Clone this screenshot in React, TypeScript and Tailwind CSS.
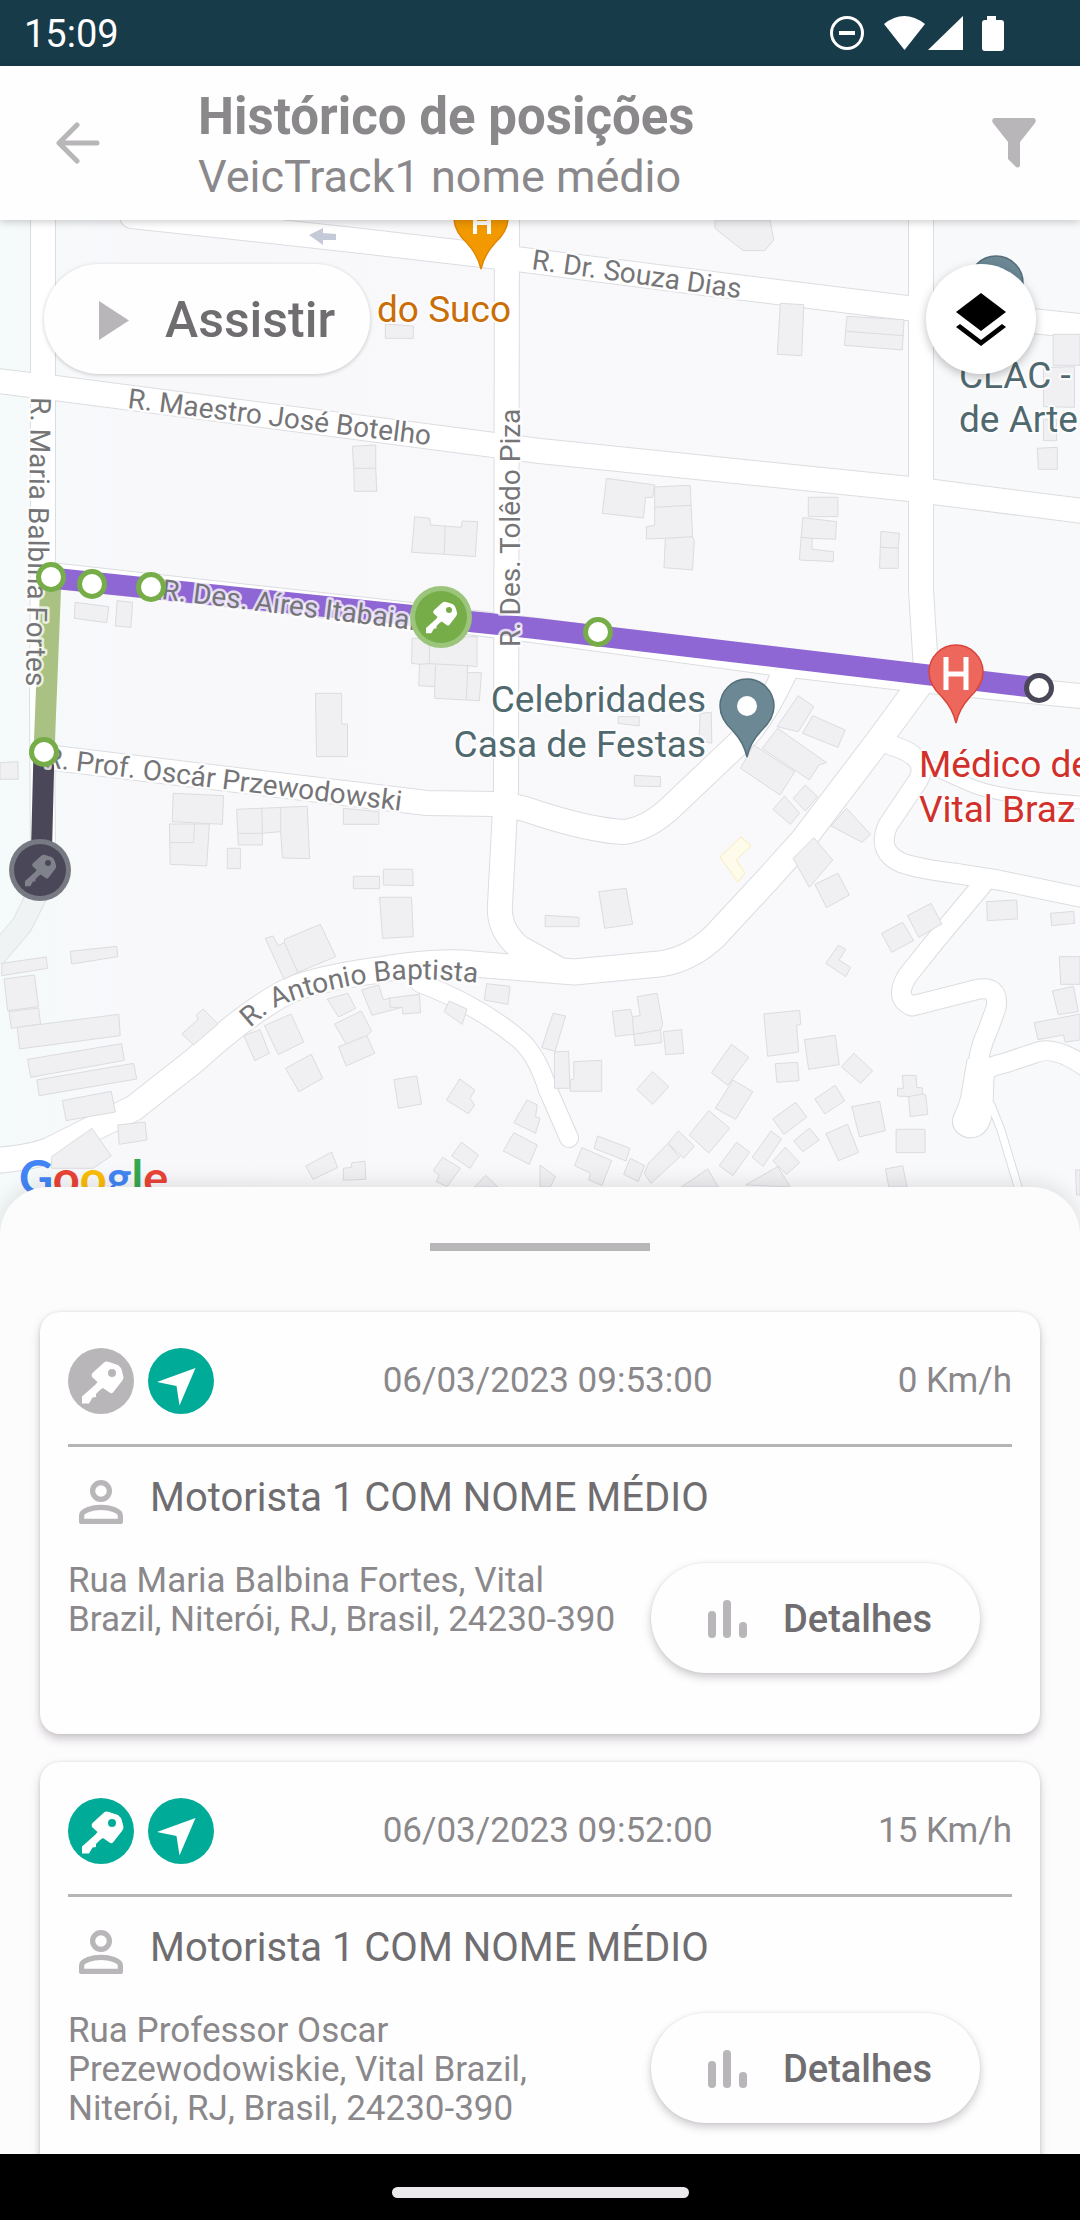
const tiles = [
    {
        x: 0, y: 220,
        buildings: [
            "1119,312 1200,318 1200,355 1119,355",
            "1023,679 1091,675 1091,745 1094,814 1029,814 1027,745",
            "1204,890 1248,895 1250,915 1340,922 1342,903 1387,905 1380,1010 1290,1003 1195,997",
        ],
        walls: ["1027,745 1091,745", "1293,918 1290,1003"],
    },
    {
        x: 540, y: 220,
        buildings: [
            "508,0 668,0 679,60 652,92 590,92 508,25",
            "698,250 766,254 760,407 689,403",
            "891,289 1057,299 1052,390 884,376",
            "1490,343 1568,343 1568,436 1490,436",
            "1462,443 1552,440 1552,562 1462,560",
            "1462,598 1500,598 1500,662 1462,662",
            "1444,685 1502,682 1502,748 1447,748",
            "193,775 333,795 327,832 307,832 300,894 181,880",
            "333,801 436,796 443,950 448,962 443,1050 360,1043 364,955 309,957 309,920 333,916",
            "779,832 865,832 865,890 779,890",
            "763,893 861,905 858,958 790,955 790,988 852,995 852,1025 753,1020",
            "990,934 1044,940 1040,984 1040,1045 986,1045 988,985",
        ],
        walls: ["891,334 1055,347", "333,862 438,856", "364,955 443,950", "757,952 790,955", "988,982 1040,984"],
    },
    {
        x: 0, y: 540,
        buildings: [
            "218,187 316,200 310,248 216,235",
            "340,182 385,187 380,262 335,258",
            "1197,295 1385,290 1385,380 1358,377 1357,398 1398,398 1392,482 1262,475 1262,440 1216,437 1218,373 1195,370",
            "916,460 992,460 992,552 1009,552 1009,650 919,650",
            "0,668 52,665 53,718 0,718",
            "503,760 649,767 646,853 500,845",
            "492,852 608,852 600,978 494,973",
            "687,808 892,799 899,956 820,954 815,875 762,880 762,915 692,915",
            "660,925 698,925 698,986 660,986",
            "997,805 1100,815 1100,853 997,853",
            "1026,1009 1102,1009 1102,1046 1026,1046",
            "1113,988 1198,988 1200,1037 1113,1035",
        ],
        walls: [
            "1247,295 1247,371 1358,377 1354,478",
            "1218,373 1247,371",
            "1265,375 1262,440",
            "494,908 562,908 565,852",
            "760,806 762,880 692,880",
            "815,802 815,875",
        ],
    },
    {
        x: 540, y: 540,
        buildings: [
            "227,530 288,530 288,558 227,550",
            "465,520 497,517 499,610 462,600",
            "274,706 350,710 350,740 274,738",
            "750,467 795,500 750,575 688,560",
            "792,527 886,570 865,622 762,580",
            "690,565 832,668 810,675 782,720 645,625",
            "620,615 740,695 697,765 582,685",
            "770,735 806,770 770,813 735,775",
            "710,768 754,820 727,853 676,808",
            "890,805 960,883 935,907 845,858",
            "795,893 850,960 782,1042 735,955",
            "865,1000 898,1065 832,1103 798,1033",
            "1297,1085 1384,1080 1387,1137 1299,1142",
            "1135,1090 1167,1152 1100,1192 1067,1127",
            "171,1055 250,1045 269,1153 188,1165",
        ],
        walls: [],
    },
    {
        x: 0, y: 880,
        buildings: [
            "1102,52 1195,52 1200,170 1111,175",
            "770,175 793,168 807,197 826,188 826,178 930,133 975,230 865,277 825,298",
            "204,214 339,199 342,230 208,252",
            "5,250 134,231 138,265 5,287",
            "12,297 100,285 112,380 22,392",
            "26,395 112,384 118,432 33,445",
            "50,442 345,403 349,467 57,507",
            "80,538 353,491 361,541 89,592",
            "107,600 388,550 397,597 114,647",
            "181,662 323,634 335,696 192,722",
            "342,735 421,726 427,780 346,793",
            "267,745 323,828 270,865 150,865 150,830",
            "528,462 575,418 570,405 590,387 633,432 562,495",
            "708,467 755,449 782,520 740,542",
            "768,437 845,402 882,486 808,524",
            "829,565 904,523 937,595 868,635",
            "971,432 1049,393 1079,453 1065,467 1088,520 1005,558 983,500 1005,492",
            "950,357 1010,340 1033,385 983,411",
            "1050,330 1100,315 1113,360 1131,354 1218,343 1221,398 1170,402 1168,382 1080,406",
            "1304,363 1356,387 1342,433 1290,395",
            "1413,311 1481,319 1475,373 1406,360",
            "1144,599 1210,588 1224,672 1157,685",
            "1335,597 1379,630 1365,655 1378,675 1360,701 1296,660",
            "1530,660 1560,675 1555,710 1568,715 1555,760 1492,728",
            "1492,758 1560,795 1537,853 1461,813",
            "1340,787 1389,825 1365,865 1311,828",
            "1285,832 1337,865 1298,920 1267,905 1275,885 1258,872",
            "888,858 963,816 980,863 909,898",
            "997,865 1020,862 1022,848 1060,844 1062,898 997,901",
            "1410,886 1446,921 1378,921",
        ],
        walls: ["826,188 865,277", "1005,492 1065,467", "1131,354 1133,382 1168,382"],
    },
    {
        x: 540, y: 880,
        buildings: [
            "15,106 113,112 113,140 15,140",
            "282,350 340,340 356,432 350,452 353,488 276,497 272,463 219,469 210,394 263,388 268,410 291,407",
            "358,455 411,449 417,520 365,524",
            "38,400 74,408 44,514 5,503",
            "42,516 83,514 87,625 42,625",
            "98,545 179,541 179,634 88,634 88,600 98,597",
            "327,575 374,620 327,673 281,628",
            "556,493 606,532 545,616 498,578",
            "560,600 618,635 568,718 509,685",
            "490,692 551,745 490,819 433,765",
            "402,753 448,798 417,835 372,790",
            "372,790 405,832 322,910 303,880 315,850",
            "167,768 261,805 250,843 157,805",
            "122,803 208,842 180,916 141,900 147,880 100,857",
            "262,835 304,857 285,905 243,883",
            "0,855 45,890 30,921 0,921",
            "487,867 518,921 410,921",
            "690,860 727,921 597,915",
            "571,787 609,817 560,887 520,857",
            "671,753 701,777 648,859 616,832",
            "712,802 754,848 716,883 676,843",
            "782,744 811,780 763,815 737,783",
            "742,667 775,711 708,763 676,717",
            "857,616 885,662 827,702 798,657",
            "650,402 754,391 757,433 745,436 751,516 661,529",
            "768,479 857,466 869,554 780,568",
            "683,551 748,547 752,602 688,607",
            "911,520 966,572 931,610 875,560",
            "905,680 986,664 1003,752 928,771",
            "830,761 893,733 925,817 867,842",
            "1052,586 1092,586 1094,622 1111,624 1111,642 1120,645 1126,703 1075,710 1070,650 1038,648 1038,625 1055,625",
            "1034,748 1118,748 1118,818 1034,818",
            "1003,867 1053,857 1066,921 1013,921",
            "866,196 888,208 868,240 902,262 888,290 830,250",
            "992,160 1053,127 1085,182 1021,217",
            "1482,100 1550,94 1552,130 1486,137",
            "1508,230 1568,230 1568,313 1512,313",
            "1488,333 1549,319 1563,395 1505,404",
            "1435,428 1568,402 1568,480 1525,487 1520,465 1446,479",
            "1555,870 1568,870 1568,945 1558,945",
        ],
        walls: ["268,410 272,463 350,450", "1070,650 1111,642"],
    },
];

const roads = [
    { d: "M43 200V540L42 700L43 870", width: 24 },
    { d: "M132 216L344 239L508 258L720 285L907 308L1090 327", width: 24 },
    { d: "M-10 380L55 388L494 445L540 451L910 489L934 492L1090 512", width: 24 },
    { d: "M507 200L506 790L500 905Q498 930 520 948L560 970", width: 24 },
    { d: "M921 200V590L926 670", width: 24 },
    { d: "M50 575L411 615L540 631L774 663L920 680L1090 697", width: 24 },
    { d: "M46 757L427 803L494 804Q512 804 540 814Q590 830 623 832Q645 830 668 810L745 737Q765 715 785 672", width: 24 },
    { d: "M926 676L879 740L803 840L767 880L715 936Q690 960 659 964L574 972L473 964Q440 960 379 970Q320 978 290 990Q250 1010 195 1060L134 1108L50 1150Q30 1158 -10 1161", width: 25 },
    { d: "M420 983Q480 1006 520 1040Q537 1055 548 1090L569 1138", width: 18 },
    { d: "M890 745Q935 758 915 785L888 825Q876 852 902 863Q920 869 953 873L998 880L1090 899", width: 19 },
    { d: "M925 765L970 785Q1000 798 1090 803", width: 12 },
    { d: "M982 885L936 940L908 975Q893 998 912 1006L975 990Q1000 984 996 1008L988 1030Q978 1050 976 1080", width: 19 },
    { d: "M978 1075Q990 1066 1005 1063L1035 1053Q1055 1044 1090 1070", width: 19 },
    { d: "M991 1105L1001 1130L1022 1200", width: 7 },
];

const deadEnd = "M968 1060L962 1095Q960 1105 956 1112Q950 1124 958 1132Q968 1140 979 1135Q987 1131 990 1120L992 1108L993 1078Q994 1071 1002 1069L985 1055Z";

const stops = [
    { x: 51, y: 577, color: "#76ad48" },
    { x: 92, y: 584, color: "#76ad48" },
    { x: 151, y: 587, color: "#76ad48" },
    { x: 44, y: 752, color: "#76ad48" },
    { x: 598, y: 632, color: "#76ad48" },
    { x: 1039, y: 688, color: "#4a4858" },
];

const positions = [
    {
        date: "06/03/2023 09:53:00",
        speed: "0 Km/h",
        driver: "Motorista 1 COM NOME MÉDIO",
        address: "Rua Maria Balbina Fortes, Vital Brazil, Niterói, RJ, Brasil, 24230-390",
        ignition: false,
    },
    {
        date: "06/03/2023 09:52:00",
        speed: "15 Km/h",
        driver: "Motorista 1 COM NOME MÉDIO",
        address: "Rua Professor Oscar Prezewodowiskie, Vital Brazil, Niterói, RJ, Brasil, 24230-390",
        ignition: true,
    },
];

const keyPath = "M36 14.5Q38 13 41 14L50 17Q53 19 54 23L55.5 29Q55.5 31 54 33L45 44.5Q43.5 46 41.5 44.5L35 40L32 42L28 46L28 49L24.5 49.5L21 55.5H14V48.5L27.5 36.5L29.5 34L24 29Q23 27 24.5 25Z";

function StatusBar() {
    return (
        <div className="flex h-[66px] flex-none items-center justify-between bg-[#183b4a] pt-0.5 pr-[76px] pl-6 text-white">
            <span className="text-[38px]">15:09</span>
            <svg viewBox="0 0 174 36" className="h-9 w-[174px]" fill="#fff">
                <circle cx="17" cy="17" r="15.5" fill="none" stroke="#fff" strokeWidth="3" />
                <rect x="9" y="15" width="16" height="4" />
                <path d="M54 8Q74 -8 95 8L74.5 34Z" />
                <path d="M98 34L133 0V34Z" />
                <path d="M157 0h9v4h5a3 3 0 0 1 3 3v25a3 3 0 0 1-3 3h-16a3 3 0 0 1-3-3V7a3 3 0 0 1 3-3h2z" />
            </svg>
        </div>
    );
}

function Header() {
    return (
        <header className="relative z-10 flex h-[154px] flex-none items-center bg-[#fefefe] pr-11 pl-14 text-[#8a888b] shadow-[0_2px_8px_rgba(0,0,0,0.2)]">
            <button type="button" aria-label="Voltar">
                <svg viewBox="0 0 44 44" className="h-11 w-11" fill="none" stroke="#b8b6b8" strokeWidth="5" strokeLinecap="round" strokeLinejoin="round">
                    <path d="M41 22H4M21 4L3 22L21 40" />
                </svg>
            </button>
            <div className="ml-[98px] flex-1 pt-2">
                <h1 className="text-[51px] leading-[60px] font-bold">Histórico de posições</h1>
                <p className="text-[45px] leading-[60px]">VeicTrack1 nome médio</p>
            </div>
            <button type="button" aria-label="Filtrar">
                <svg viewBox="0 0 44 50" className="h-[50px] w-11" fill="#b8b6b8">
                    <path d="M2 0H42Q45 2 43 5L28 24V48Q26 51 23 48L16 41V24L1 5Q-1 2 2 0Z" />
                </svg>
            </button>
        </header>
    );
}

function Pin({ x, y, fill, edge }: { x: number; y: number; fill: string; edge: string }) {
    return (
        <path
            transform={`translate(${x} ${y})`}
            d="M0 50Q-3 36 -14 24Q-27 12 -27 -1A27 27 0 0 1 27 -1Q27 12 14 24Q3 36 0 50Z"
            fill={fill}
            stroke={edge}
            strokeWidth="1.5"
        />
    );
}

function KeyMarker({ x, y, fill, ring, glyph }: { x: number; y: number; fill: string; ring: string; glyph: string }) {
    return (
        <g transform={`translate(${x} ${y})`}>
            <circle r="31" fill={ring} />
            <circle r="26" fill={fill} />
            <path d={keyPath} fill={glyph} transform="scale(.75) translate(-34 -34)" />
            <circle cx="8" cy="-7" r="3" fill={fill} />
        </g>
    );
}

function StreetMap() {
    return (
        <svg viewBox="0 220 1080 1015" className="block w-full" fontFamily="Roboto, sans-serif">
            <defs>
                <linearGradient id="ground">
                    <stop offset="0" stopColor="#f5fafa" />
                    <stop offset=".12" stopColor="#f8f8fb" />
                    <stop offset=".8" stopColor="#f9f9fb" />
                    <stop offset="1" stopColor="#f7f9fa" />
                </linearGradient>
                <path id="antonio" d="M250 1028L271 1010Q300 995 361 984Q410 975 480 983" />
            </defs>
            <rect y="220" width="1080" height="1015" fill="url(#ground)" />

            <path d="M42 885L22 925L-6 958" fill="none" stroke="#e0e2e4" strokeWidth="22" />
            <path d="M42 885L22 925L-6 958" fill="none" stroke="#f0f3f4" strokeWidth="20" />
            <g fill="none" stroke="#dcdde0" strokeLinecap="round" strokeLinejoin="round">
                {roads.map((r) => <path key={r.d} d={r.d} strokeWidth={r.width + 2} />)}
                <path d={deadEnd} strokeWidth="3" />
            </g>
            <g fill="none" stroke="#fff" strokeLinecap="round" strokeLinejoin="round">
                {roads.map((r) => <path key={r.d} d={r.d} strokeWidth={r.width} />)}
                <path d={deadEnd} fill="#fff" strokeWidth="1" />
            </g>

            {tiles.map((t) => (
                <g key={`${t.x}-${t.y}`} transform={`translate(${t.x} ${t.y}) scale(.3444 .3333)`} fill="#f0f0f3" stroke="#dcdce0">
                    {t.buildings.map((b) => <polygon key={b} points={b} vectorEffect="non-scaling-stroke" />)}
                    {t.walls.map((w) => <polyline key={w} points={w} fill="none" vectorEffect="non-scaling-stroke" />)}
                </g>
            ))}
            <path d="M741 837L751 846L736 860L745 873L738 882L720 857Z" fill="#fffbea" stroke="#f8ecb8" />
            <path d="M309 235L323 228V233L336 234V240H323V245Z" fill="#c5cad9" />

            {/* route */}
            <g fill="none" strokeWidth="21">
                <path d="M44 752L41 870" stroke="#4a4858" />
                <path d="M51 577L44 752" stroke="#a9c284" />
                <path d="M51 578L494 624L540 629L1039 688" stroke="#8f67d4" />
            </g>

            <g fontSize="28" fill="#757578" stroke="#fff" strokeOpacity=".75" strokeWidth="5" paintOrder="stroke" strokeLinejoin="round">
                <text transform="translate(127 408) rotate(7)">R. Maestro José Botelho</text>
                <text transform="translate(531 269) rotate(8)">R. Dr. Souza Dias</text>
                <text transform="translate(31 397) rotate(91)">R. Maria Balbina Fortes</text>
                <text transform="translate(520 647) rotate(-90)">R. Des. Tolêdo Piza</text>
                <text transform="translate(161 599) rotate(7)">R. Des. Aíres Itabaiana</text>
                <text transform="translate(44 767) rotate(7)">R. Prof. Oscár Przewodowski</text>
                <text><textPath href="#antonio">R. Antonio Baptista</textPath></text>
            </g>

            {stops.map((s) => (
                <circle key={s.x} cx={s.x} cy={s.y} r="12.5" fill="#fff" stroke={s.color} strokeWidth="5" />
            ))}
            <KeyMarker x={441} y={617} fill="#76ad48" ring="#9cc57c" glyph="#fff" />
            <KeyMarker x={40} y={870} fill="#4a4858" ring="#777983" glyph="#80828b" />

            <Pin x={481} y={219} fill="#f29900" edge="#e08600" />
            <path d="M475 210V234M489 210V234M475 223H489" stroke="#fff" strokeWidth="4" fill="none" />
            <Pin x={996} y={284} fill="#6b8894" edge="#546e7a" />
            <Pin x={747} y={707} fill="#6b8894" edge="#546e7a" />
            <circle cx="747" cy="706" r="10" fill="#fff" />
            <Pin x={956} y={673} fill="#ee675c" edge="#d9453b" />
            <path d="M946 657V690M966 657V690M946 674H966" stroke="#fff" strokeWidth="5" />

            <g fontSize="37" stroke="#fff" strokeOpacity=".8" strokeWidth="4" paintOrder="stroke" strokeLinejoin="round">
                <text x="377" y="322" fill="#cb6d05">do Suco</text>
                <g fill="#50696f">
                    <text x="959" y="388">CLAC -</text>
                    <text x="959" y="432">de Arte</text>
                    <text x="706" y="712" textAnchor="end">Celebridades</text>
                    <text x="706" y="757" textAnchor="end">Casa de Festas</text>
                </g>
                <g fill="#d2302a">
                    <text x="919" y="777">Médico de</text>
                    <text x="919" y="822">Vital Braz</text>
                </g>
            </g>

            <text x="19" y="1195" fontSize="47" fontFamily="Lato, sans-serif" fontWeight="700">
                <tspan fill="#4285f4">G</tspan>
                <tspan fill="#ea4335">o</tspan>
                <tspan fill="#fbbc05">o</tspan>
                <tspan fill="#4285f4">g</tspan>
                <tspan fill="#34a853">l</tspan>
                <tspan fill="#ea4335">e</tspan>
            </text>
        </svg>
    );
}

function PositionCard({ position }: { position: (typeof positions)[number] }) {
    return (
        <li className="flex-none rounded-[20px] bg-[#fefefe] px-7 pt-9 pb-[61px] shadow-[0_5px_10px_rgba(60,50,60,0.26),0_0_3px_rgba(60,50,60,0.12)]">
            <div className="grid grid-cols-3 items-center text-[35px] whitespace-nowrap text-[#8a888b]">
                <div className="flex gap-3.5">
                    <svg viewBox="0 0 66 66" className="h-[66px] w-[66px]">
                        <circle cx="33" cy="33" r="33" fill={position.ignition ? "#00ab97" : "#b8b6b8"} />
                        <path d={keyPath} fill="#fff" />
                        <circle cx="44" cy="25" r="4" fill={position.ignition ? "#00ab97" : "#b8b6b8"} />
                    </svg>
                    <svg viewBox="0 0 66 66" className="h-[66px] w-[66px]">
                        <circle cx="33" cy="33" r="33" fill="#00ab97" />
                        <path d="M47.5 20L9 34L28.5 38L31.5 57.5Z" fill="#fff" />
                    </svg>
                </div>
                <time>{position.date}</time>
                <span className="text-right">{position.speed}</span>
            </div>
            <hr className="mt-[30px] border-t-[3px] border-[#b6b5b6]" />
            <div className="mt-[22px] flex items-center gap-4">
                <svg viewBox="0 0 24 24" className="h-[66px] w-[66px]" fill="none" stroke="#b8b6b8" strokeWidth="1.9" strokeLinejoin="round">
                    <circle cx="12" cy="8" r="3.05" />
                    <path d="M4.95 19.05V17C4.95 15 9 13.95 12 13.95S19.05 15 19.05 17V19.05Z" />
                </svg>
                <p className="pb-2 text-[40px] leading-[44px] text-[#6f6d70]">{position.driver}</p>
            </div>
            <div className="mt-[26px] flex items-start gap-8 pr-8">
                <p className="flex-1 text-[35px] leading-[39px] text-[#8a888b]">{position.address}</p>
                <button type="button" className="mt-0.5 flex h-[110px] w-[329px] items-center gap-9 rounded-full bg-[#fefefe] pt-0.5 pl-[57px] text-[38px] font-medium text-[#6f6d70] shadow-[0_4px_8px_rgba(60,50,60,0.26),0_0_2px_rgba(60,50,60,0.12)]">
                    <svg viewBox="0 0 39 38" className="h-[38px] w-[39px]" fill="#b8b6b8">
                        <rect y="11" width="8" height="27" rx="4" />
                        <rect x="15" width="8" height="38" rx="4" />
                        <rect x="31" y="22" width="8" height="16" rx="4" />
                    </svg>
                    Detalhes
                </button>
            </div>
        </li>
    );
}

export default function App() {
    return (
        <div className="flex h-screen flex-col overflow-hidden bg-[#fdfcfd] font-[Roboto,sans-serif]">
            <StatusBar />
            <Header />
            <main className="flex min-h-0 flex-1 flex-col">
                <section className="relative flex-none">
                    <StreetMap />
                    <div className="absolute inset-x-11 top-11 flex justify-between">
                        <button type="button" className="flex h-[110px] w-[326px] items-center gap-9 rounded-full bg-[#fefefe] pt-0.5 pl-[55px] text-[50px] font-medium text-[#6f6d70] shadow-[0_1px_4px_rgba(0,0,0,0.2)]">
                            <svg viewBox="0 0 30 39" className="h-[39px] w-[30px]" fill="#b8b6b8">
                                <path d="M0 0L30 19.5L0 39Z" />
                            </svg>
                            Assistir
                        </button>
                        <button type="button" aria-label="Camadas" className="flex h-[110px] w-[110px] items-center justify-center rounded-full bg-white shadow-[0_3px_10px_rgba(0,0,0,0.25)]">
                            <svg viewBox="0 0 50 53" className="h-[53px] w-[50px]">
                                <path d="M25 0L50 19L25 38L0 19Z" />
                                <path d="M0 34L4 31L25 47L46 31L50 34L25 53Z" />
                            </svg>
                        </button>
                    </div>
                </section>
                <section className="relative -mt-12 flex min-h-0 flex-1 flex-col items-center rounded-t-[48px] bg-[#fdfcfd] pt-14 shadow-[0_-4px_20px_rgba(0,0,0,0.1)]">
                    <div className="h-2 w-[220px] flex-none bg-[#b8b6b8]" />
                    <ul className="mt-[21px] flex min-h-0 w-full flex-1 flex-col gap-7 overflow-y-auto px-10 pt-10 [scrollbar-width:none]">
                        {positions.map((p) => <PositionCard key={p.date} position={p} />)}
                    </ul>
                </section>
            </main>
            <footer className="relative flex h-[66px] flex-none items-center justify-center bg-black pt-2.5">
                <div className="h-[11px] w-[297px] rounded-full bg-[#eceaec]" />
            </footer>
        </div>
    );
}
